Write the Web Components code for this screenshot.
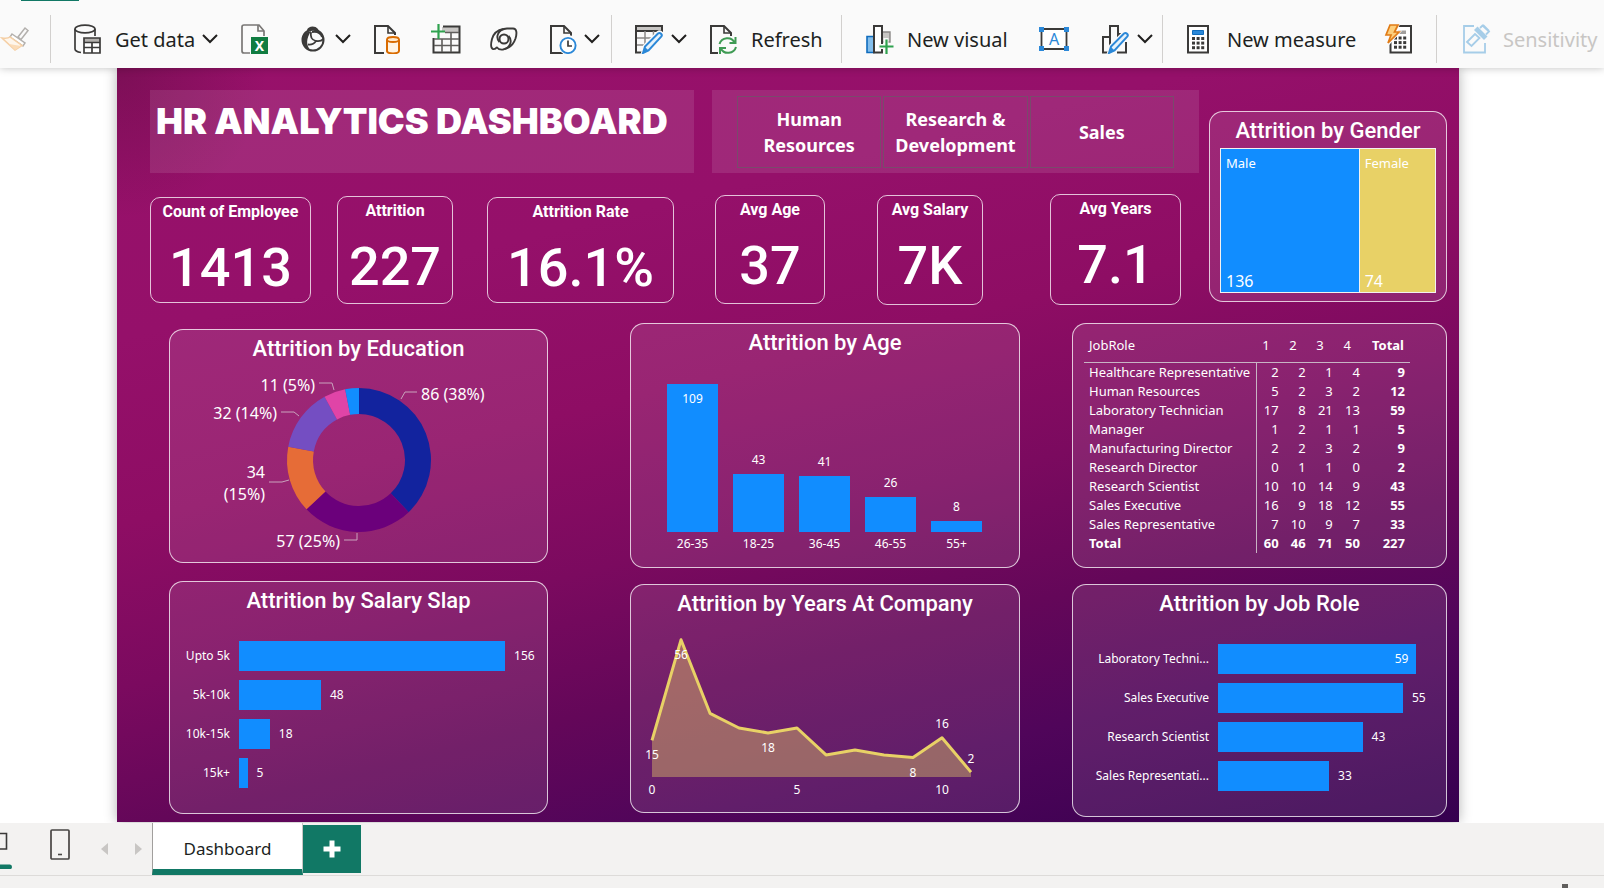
<!DOCTYPE html>
<html lang="en">
<head>
<meta charset="utf-8">
<title>HR Analytics Dashboard</title>
<style>
  html, body { margin: 0; height: 100%; }
  body {
    background: #fff;
    color: #201f1e;
    font-family: "Noto Sans", "Open Sans", sans-serif;
  }
</style>
</head>
<body>
<report-app></report-app>

<script>
const define = (name, html, render) => {
  const tpl = document.createElement('template');
  tpl.innerHTML = html;
  customElements.define(name, class extends HTMLElement {
    constructor() {
      super();
      this.attachShadow({ mode: 'open' }).append(tpl.content.cloneNode(true));
    }
    connectedCallback() {
      if (render && !this.ready) { this.ready = true; render(this, this.shadowRoot); }
    }
  });
};

/* ---------- icons, all on a 30 x 30 grid ---------- */
const D = '#3b3a39';
const page = (c = D) => `<path d="M14 29H2V2h13l7 7v3" stroke="${c}" stroke-width="2"/><path d="M15 2v7h7" stroke="${c}" stroke-width="1.6"/>`;
const pencil = `<path d="M9 29l2-7L24 9c2-1.600 5 1 3.500 3.500L15 26z" fill="#fafafa" stroke="#fafafa" stroke-width="4"/><path d="M9 29l2-6.500L24 9.500c2-1.600 5 1 3.200 3.200L14.500 26.500z" fill="#e6f2fb" stroke="#2b88d8" stroke-width="2"/><path d="M9 29l2-6 3.500 3.500z" fill="#2b88d8"/>`;
const dots = (x, y) => [0, 1, 2].map(r => [0, 1, 2].map(c => `<path d="M${x + c * 4.600} ${y + r * 4.600}h3v3h-3z" fill="${D}"/>`).join('')).join('');
const ICONS = {
  brush: `<path d="M18 13l7-9 3 2.500-7 9z" stroke="#b3b0ad" stroke-width="1.500"/><path d="M12 10l13 9-2 3-13-9z" stroke="#b3b0ad" stroke-width="1.500" fill="#fff"/><path d="M10 13c-2.500 2-5 1.500-8 1l13 12 7-4.500z" stroke="#f5cfa5" stroke-width="1.500" fill="#fef6ec"/><path d="M9 20l12 2-6 4z" fill="#fbdcb8"/>`,
  data: `<ellipse cx="12" cy="5" rx="10" ry="3.800" stroke="${D}" stroke-width="1.700"/><path d="M2 5v20c0 2 3 3 6 3.500M22 5v7" stroke="${D}" stroke-width="1.700"/><path d="M11 14h16v15H11z" fill="#fff"/><path d="M11 14h16v4H11z" fill="#b3b0ad"/><path d="M11 14h16v15H11zM11 18.500h16M11 23.500h16M19 18.500V29" stroke="${D}" stroke-width="1.700"/>`,
  excel: `<path d="M10 29H4q-2 0-2-2V3q0-2 2-2h15l5 6v5" stroke="#797775" stroke-width="1.700"/><path d="M18 1v6h6" stroke="#797775" stroke-width="1.700"/><path d="M11 13h17v17H11z" fill="#107c41"/><text x="19.500" y="26.500" text-anchor="middle" font-size="14" font-weight="700" fill="#fff">X</text>`,
  lake: `<circle cx="15" cy="16" r="10.500" stroke="${D}" stroke-width="2"/><path d="M13 7C5 9 3 13 4.500 18c1 4 4 7 8 8.300C8 21 8 15 13 7z" fill="${D}"/><path d="M9 6c1-4 8-5 11-1l1 3c-4-2-8-2-11 0z" fill="${D}"/><path d="M13 8c-1 5 1 8 5 9 3 .500 5.500 0 7.500-2M14 8c6-1 9 2 10 5M18 17c-2 3-4 4-8 3.500" stroke="${D}" stroke-width="1.800"/>`,
  pagedb: `${page()}<path d="M11 11h18v19H11z" fill="#fafafa"/><path d="M14 15.500v11.500c0 3.200 12 3.200 12 0V15.500" stroke="#d96b00" stroke-width="2" fill="#fff3e3"/><ellipse cx="20" cy="15.500" rx="6" ry="2.500" stroke="#d96b00" stroke-width="1.800" fill="#ffe9cc"/>`,
  tableplus: `<path d="M11 3h18v5H11z" fill="#c8c6c4"/><path d="M12 2.500h16.500V28.500H2.500V14" stroke="${D}" stroke-width="2"/><path d="M14 8.500h14M3 15h25M3 21.500h25M11 15v13M20 9v19" stroke="#605e5c" stroke-width="1.600"/><path d="M7.500 0v15M0 7.500h14" stroke="#2fa24f" stroke-width="2.200"/>`,
  swirl: `<circle cx="15" cy="15" r="4.500" stroke="${D}" stroke-width="2"/><path d="M10.500 18C6 13 9 5 18 4.500h6c4 0 4 5 2.500 10-2 6-6 9.500-11 10.500" stroke="${D}" stroke-width="1.900"/><path d="M19.500 12c4.500 5 1.500 12-5.500 13.500-3 .500-5-.500-6.500-2.500M14.500 5C9 6 4.500 9.500 3 15c-1 4-2 9 1 10 2 .500 3-.500 4-2" stroke="${D}" stroke-width="1.900"/>`,
  pageclock: `<g transform="translate(2 0)">${page()}<circle cx="19" cy="21" r="10" fill="#fafafa"/><circle cx="19" cy="21.500" r="7.600" fill="#fff" stroke="#2b88d8" stroke-width="1.900"/><path d="M19 16.500v5.500h4" stroke="${D}" stroke-width="1.700"/></g>`,
  tablepen: `<path d="M2 2h26v5H2z" fill="#c8c6c4"/><path d="M9 28.500H2V2h26v5H2" stroke="${D}" stroke-width="2"/><path d="M3 14h17M3 21h9M11 7v15M19.500 7v7" stroke="#8a8886" stroke-width="1.500"/>${pencil}`,
  refresh: `${page()}<path d="M9 13h18v17H9z" fill="#fafafa"/><path d="M10.500 20c2-7 12-8 15-1.500M26.500 13v6h-6M27 23c-2 7-12 8-15 1.500M11 30v-6h6" stroke="#3f9b54" stroke-width="2"/>`,
  visual: `<path d="M2 12.500h7v16H2z" fill="#83beec" stroke="#0f6cbd" stroke-width="1.600"/><path d="M16 8h9v10h-9z" fill="#c8c6c4" stroke="#8a8886" stroke-width="1.400"/><path d="M9 2h8v26.500H9z" fill="#fff" stroke="${D}" stroke-width="2"/><path d="M21 14v16M13 22.500h16" stroke="#fafafa" stroke-width="5"/><path d="M21.500 15.500V30M14.500 22.500h14" stroke="#2fa24f" stroke-width="2.200"/>`,
  textbox: `<path d="M2.500 5h25v20h-25z" fill="#fff" stroke="${D}" stroke-width="1.800"/><path d="M0 3h5v5H0zM25 3h5v5h-5zM0 22h5v5H0zM25 22h5v5h-5z" fill="#2b88d8"/><text x="15" y="21" text-anchor="middle" font-size="16" fill="#2b88d8">A</text>`,
  shapes: `<path d="M9 28.500H3V13h6M26 18v10.500h-9M10 24V2h8v12" stroke="${D}" stroke-width="2"/><path d="M18 10h6" stroke="${D}" stroke-width="2"/>${pencil}`,
  calc: `<path d="M3 2h20v26.500H3z" fill="#fff" stroke="${D}" stroke-width="2"/><path d="M7.500 6.500h11v4h-11z" fill="#2b88d8" stroke="#0f6cbd"/>${dots(7, 13)}`,
  flash: `<path d="M14 2h13v26.500H6.500V18" fill="#fff" stroke="${D}" stroke-width="2"/><path d="M14 6.500h8v3.500h-8z" fill="#a19f9d"/>${dots(10, 12.500)}<path d="M6 1h8L10.500 8H15L4 20l3-8H2z" fill="#fafafa" stroke="#fafafa" stroke-width="3"/><path d="M6 1h8L10.500 8H15L4 19l3-8H2z" fill="#fdcf7d" stroke="#e07b16" stroke-width="1.700"/>`,
  label: `<path d="M13 2H3v26.500h21V19" stroke="#a6cde8" stroke-width="1.800"/><path d="M6 18l8-8 4.500 4-8 8z" stroke="#a6cde8" stroke-width="1.800"/><path d="M13 6l10 10 3.500-3.500L16.500 2.500z" fill="#a6cde8"/><path d="M19 4l2.500-2.500 6.500 6-3 3M22 1l6 6" stroke="#a6cde8" stroke-width="1.800"/>`
};
define('icon-glyph', `
<style>:host{display:block;flex:none;width:30px;height:30px} svg{display:block;width:100%;height:100%;fill:none}</style>
<svg viewBox="0 0 30 30" aria-hidden="true"></svg>`,
  (el, r) => { r.querySelector('svg').innerHTML = ICONS[el.getAttribute('name')]; });

/* ---------- ribbon ---------- */
define('tool-button', `
<style>
:host{display:block;flex:none}
:host([menu]){margin-right:-6px}
button{display:flex;align-items:center;border:0;padding:0;background:none;font:inherit;font-size:20px;line-height:28px;color:inherit;white-space:nowrap}
.text{margin-left:12px;padding-top:2px}
.text:empty{display:none}
.chev{width:16px;height:10px;fill:none;stroke:#201f1e;stroke-width:2;margin-left:7px;display:none}
:host([menu]) .chev{display:block}
:host([disabled]) button{color:#c8c6c4}
</style>
<button type="button"><icon-glyph></icon-glyph><span class="text"></span><svg class="chev" viewBox="0 0 16 10" aria-hidden="true"><path d="M1 1l7 7 7-7"/></svg></button>`,
  (el, r) => {
    const label = el.getAttribute('label');
    const g = document.createElement('icon-glyph');
    g.setAttribute('name', el.getAttribute('icon'));
    r.querySelector('icon-glyph').replaceWith(g);
    if (label) r.querySelector('.text').textContent = label;
    r.querySelector('button').setAttribute('aria-label', label || el.getAttribute('icon'));
    if (el.hasAttribute('disabled')) r.querySelector('button').disabled = true;
  });

define('tool-group', `
<style>
:host{display:flex;align-items:center;box-sizing:border-box;height:48px;border-right:1px solid #d2d0ce;padding-left:22px;gap:28px;min-width:0}
:host([first]){padding-left:0}
:host([last]){border-right:0;padding-left:24px}
:host([wide]){padding-left:23px;gap:31px}
</style><slot></slot>`);

define('ribbon-bar', `
<style>
:host{display:block;position:relative;z-index:1;background:#fafafa;box-shadow:0 0 8px rgba(0,0,0,.25);clip-path:inset(0 0 -12px 0)}
.accent{width:58px;height:1px;margin-left:21px;background:#117865}
.row{display:grid;grid-template-columns:minmax(0,51fr) minmax(0,561fr) minmax(0,230fr) minmax(0,321fr) minmax(0,274fr) minmax(0,167fr);padding:14px 0 5px}
</style>
<div class="accent"></div>
<div class="row">
  <tool-group first><tool-button icon="brush"></tool-button></tool-group>
  <tool-group>
    <tool-button icon="data" label="Get data" menu></tool-button>
    <tool-button icon="excel"></tool-button>
    <tool-button icon="lake" menu></tool-button>
    <tool-button icon="pagedb"></tool-button>
    <tool-button icon="tableplus"></tool-button>
    <tool-button icon="swirl"></tool-button>
    <tool-button icon="pageclock" menu></tool-button>
  </tool-group>
  <tool-group>
    <tool-button icon="tablepen" menu></tool-button>
    <tool-button icon="refresh" label="Refresh"></tool-button>
  </tool-group>
  <tool-group wide>
    <tool-button icon="visual" label="New visual"></tool-button>
    <tool-button icon="textbox"></tool-button>
    <tool-button icon="shapes" menu></tool-button>
  </tool-group>
  <tool-group>
    <tool-button icon="calc" label="New measure"></tool-button>
    <tool-button icon="flash"></tool-button>
  </tool-group>
  <tool-group last><tool-button icon="label" label="Sensitivity" disabled></tool-button></tool-group>
</div>`);

/* ---------- report visuals ---------- */
define('report-title', `
<style>
:host{display:block;background:rgba(255,255,255,.1);color:#fff}
h1{margin:0;padding:9px 6px 0;font:900 36px/44px Inter,sans-serif;white-space:nowrap}
</style><h1><slot></slot></h1>`);

define('slicer-tiles', `
<style>
:host{display:block;box-sizing:border-box;background:rgba(255,255,255,.1);padding:6px 25px 5px}
div{display:grid;grid-template-columns:repeat(3,minmax(0,1fr));gap:2px;height:100%}
button{border:1px solid #7a4a6c;background:none;color:#fff;padding:0;font:inherit;font-weight:700;font-size:18px;line-height:26px}
</style>
<div><button type="button">Human Resources</button><button type="button">Research &amp; Development</button><button type="button">Sales</button></div>`);

define('kpi-card', `
<style>
:host{display:block;box-sizing:border-box;border:1px solid rgba(255,255,255,.75);border-radius:10px;color:#fff;text-align:center;font-family:Roboto,sans-serif;white-space:nowrap}
h2{margin:0;font-size:16px;font-weight:700;line-height:28px}
p{margin:14px 0 6px;font-size:54px;font-weight:500;line-height:56px}
</style><h2></h2><p><slot></slot></p>`,
  (el, r) => { r.querySelector('h2').textContent = el.getAttribute('label'); });

define('visual-card', `
<style>
:host{display:block;box-sizing:border-box;border:1px solid rgba(255,255,255,.75);border-radius:14px;background:rgba(255,255,255,.1);color:#fff}
h2{margin:0;padding-top:2px;font:500 22px/34px Roboto,sans-serif;text-align:center;white-space:nowrap}
h2:empty{display:none}
</style><h2></h2><slot></slot>`,
  (el, r) => { r.querySelector('h2').textContent = el.getAttribute('heading') || ''; });

define('tree-map', `
<style>
:host{display:grid;grid-template-columns:minmax(0,139fr) minmax(0,76fr);gap:1px;margin:0 10px 8px;padding:1px;background:#f3f2f1}
div{display:flex;flex-direction:column;justify-content:space-between;height:143px;box-sizing:border-box;padding:4px 5px 0;font-size:13px;line-height:20px}
.m{background:#118dff}.f{background:#e8d166}
b{font-weight:400;font-size:16px;line-height:22px}
</style>
<div class="m"><span>Male</span><b>136</b></div><div class="f"><span>Female</span><b>74</b></div>`);

define('donut-chart', `
<style>
:host{display:block}
svg{display:block;width:100%;height:auto;fill:none}
text{font-size:16px;fill:#fff}
.lead{stroke:#c9a3bd;stroke-width:1}
</style>
<svg viewBox="0 0 377 196" role="img" aria-label="Attrition by education">
<g class="ring"></g>
<g class="lead"><path d="M231 33l4-7h12"/><path d="M149 17h13l2 7"/><path d="M111 46h13l5 4"/><path d="M99 116h13l7-2"/><path d="M174 174h13v-7"/></g>
<text x="251" y="34">86 (38%)</text>
<text x="145" y="25" text-anchor="end">11 (5%)</text>
<text x="107" y="53" text-anchor="end">32 (14%)</text>
<text x="95" y="112" text-anchor="end">34</text>
<text x="95" y="134" text-anchor="end">(15%)</text>
<text x="170" y="181" text-anchor="end">57 (25%)</text>
</svg>`,
  (el, r) => {
    const values = [86, 57, 34, 32, 11, 7];
    const colors = ['#12239e', '#6b007b', '#e66c37', '#744ec2', '#e044a7', '#118dff'];
    const total = values.reduce((a, b) => a + b);
    const cx = 189, cy = 94, R = 72, q = 46;
    let a = 0;
    const pt = (rad, t) => `${(cx + rad * Math.sin(t)).toFixed(2)} ${(cy - rad * Math.cos(t)).toFixed(2)}`;
    r.querySelector('.ring').innerHTML = values.map((v, i) => {
      const b = a + v / total * Math.PI * 2;
      const d = `M${pt(R, a)}A${R} ${R} 0 0 1 ${pt(R, b)}L${pt(q, b)}A${q} ${q} 0 0 0 ${pt(q, a)}z`;
      a = b;
      return `<path fill="${colors[i]}" d="${d}"/>`;
    }).join('');
  });

define('column-chart', `
<style>
:host{display:block;padding:0 37px 13px 36px;font-size:12px;line-height:20px;text-align:center}
.plot{display:grid;grid-template-columns:repeat(5,minmax(0,1fr));gap:15px}
.col{display:flex;flex-direction:column;justify-content:flex-end;height:172px}
.bar{background:#118dff}
.v{margin-bottom:4px}
.bar .v{display:block;margin-top:5px}
.cat{margin-top:2px}
</style><div class="plot"></div>`,
  (el, r) => {
    const data = [['26-35', 109], ['18-25', 43], ['36-45', 41], ['46-55', 26], ['55+', 8]];
    r.querySelector('.plot').innerHTML = data.map(([c, v], i) => {
      const h = `style="height:${Math.round(v / 109 * 148)}px"`;
      const bar = i ? `<span class="v">${v}</span><div class="bar" ${h}></div>` : `<div class="bar" ${h}><span class="v">${v}</span></div>`;
      return `<div><div class="col">${bar}</div><div class="cat">${c}</div></div>`;
    }).join('');
  });

define('bar-chart', `
<style>
:host{display:grid;gap:9px;padding:23px 0 25px;font-size:12px;line-height:30px;white-space:nowrap}
.row{display:grid;grid-template-columns:var(--label) minmax(0,1fr);column-gap:9px}
.name{text-align:right}
.track{display:flex;gap:9px}
.bar{height:30px;background:#118dff;text-align:right;box-sizing:border-box;padding-right:8px}
.bar:empty{padding:0}
</style>`,
  (el, r) => {
    const data = JSON.parse(el.getAttribute('data'));
    const max = data[0][1], inside = el.hasAttribute('inside'), full = inside ? 87 : 86.400;
    r.innerHTML += data.map(([n, v], i) => {
      const w = `style="width:${(v / max * full).toFixed(1)}%"`;
      const t = inside && !i ? `<div class="bar" ${w}>${v}</div>` : `<div class="bar" ${w}></div><span>${v}</span>`;
      return `<div class="row"><span class="name">${n}</span><div class="track">${t}</div></div>`;
    }).join('');
  });

define('area-chart', `
<style>
:host{display:block}
svg{display:block;width:100%;height:auto;fill:none}
text{font-size:12px;fill:#fff;text-anchor:middle}
</style>
<svg viewBox="0 0 388 191" role="img" aria-label="Attrition by years at company">
<path class="fill" fill="#e8d166" fill-opacity=".4"/><path class="line" stroke="#e8d166" stroke-width="3" stroke-linejoin="round"/>
<text x="21" y="138">15</text><text x="50" y="38">56</text><text x="137" y="131">18</text><text x="282" y="156">8</text><text x="311" y="107">16</text><text x="340" y="142">2</text>
<text x="21" y="173">0</text><text x="166" y="173">5</text><text x="311" y="173">10</text>
</svg>`,
  (el, r) => {
    const v = [15, 56, 26, 20, 18, 20, 9, 11, 9, 8, 16, 2];
    const pts = v.map((n, i) => `${21 + i * 29} ${(156 - n * 2.450).toFixed(1)}`).join('L');
    r.querySelector('.line').setAttribute('d', 'M' + pts);
    r.querySelector('.fill').setAttribute('d', `M21 156L${pts}L340 156z`);
  });

define('role-matrix', `
<style>
:host{display:block;padding:4px 11px 14px}
table{border-collapse:separate;border-spacing:0;table-layout:fixed;width:326px;font-size:13px;line-height:19px;white-space:nowrap}
th,td{padding:0 5px 0 0;text-align:right;font-weight:400}
th:first-child{text-align:left;padding:0 0 0 5px;width:167px}
thead th{height:34px;border-bottom:1px solid #c8b4c4}
thead th:not(:first-child):not(:last-child){padding-right:14px;width:13px}
tbody th,tfoot th{border-right:1px solid #c8b4c4}
td:last-child,th:last-child,tfoot th,tfoot td{font-weight:700}
thead th:last-child{padding-right:6px;width:39px}
</style>
<table>
<thead><tr><th scope="col">JobRole</th><th scope="col">1</th><th scope="col">2</th><th scope="col">3</th><th scope="col">4</th><th scope="col">Total</th></tr></thead>
<tbody></tbody><tfoot></tfoot>
</table>`,
  (el, r) => {
    const rows = [
      ['Healthcare Representative', 2, 2, 1, 4, 9], ['Human Resources', 5, 2, 3, 2, 12],
      ['Laboratory Technician', 17, 8, 21, 13, 59], ['Manager', 1, 2, 1, 1, 5],
      ['Manufacturing Director', 2, 2, 3, 2, 9], ['Research Director', 0, 1, 1, 0, 2],
      ['Research Scientist', 10, 10, 14, 9, 43], ['Sales Executive', 16, 9, 18, 12, 55],
      ['Sales Representative', 7, 10, 9, 7, 33]];
    const tr = ([n, ...c]) => `<tr><th scope="row">${n}</th>${c.map(x => `<td>${x}</td>`).join('')}</tr>`;
    r.querySelector('tbody').innerHTML = rows.map(tr).join('');
    r.querySelector('tfoot').innerHTML = tr(['Total', 60, 46, 71, 50, 227]);
  });

define('report-canvas', `
<style>
:host{
  display:block;box-sizing:border-box;padding:22px 0 5px;
  background:
    radial-gradient(circle at 0 0,rgba(60,10,40,.3),transparent 150px),
    linear-gradient(166deg,#98116a 0%,#95106a 25%,#8e0d64 42%,#7b0a5f 57%,#640759 70%,#50055a 82%,#35004f 100%);
  box-shadow:0 0 12px rgba(0,0,0,.3)}
.top{display:grid;grid-template-columns:minmax(0,33fr) minmax(0,1049fr) minmax(0,10fr) minmax(0,238fr) minmax(0,12fr)}
.left{grid-column:2}
.gender{grid-column:4;align-self:start;margin-top:21px}
.heads{display:grid;grid-template-columns:minmax(0,544fr) minmax(0,18fr) minmax(0,487fr);min-height:83px}
slicer-tiles{grid-column:3}
.kpis{display:grid;align-items:center;min-height:111px;margin-top:21px;
  grid-template-columns:minmax(0,161fr) minmax(0,26fr) minmax(0,116fr) minmax(0,34fr) minmax(0,187fr) minmax(0,41fr) minmax(0,110fr) minmax(0,52fr) minmax(0,106fr) minmax(0,67fr) minmax(0,131fr) minmax(0,18fr)}
kpi-card:nth-child(2){grid-column:3;min-height:108px}
kpi-card:nth-child(3){grid-column:5}
kpi-card:nth-child(4){grid-column:7;min-height:109px}
kpi-card:nth-child(5){grid-column:9;min-height:110px}
kpi-card:nth-child(6){grid-column:11;min-height:111px}
.charts{display:grid;margin-top:18px;
  grid-template-columns:minmax(0,52fr) minmax(0,379fr) minmax(0,82fr) minmax(0,390fr) minmax(0,52fr) minmax(0,375fr) minmax(0,12fr)}
.stack{display:flex;flex-direction:column;gap:16px}
.a{grid-column:2;padding-top:6px;gap:18px}.b{grid-column:4}.c{grid-column:6}
</style>
<div class="top">
  <div class="left">
    <div class="heads"><report-title>HR ANALYTICS DASHBOARD</report-title><slicer-tiles></slicer-tiles></div>
    <div class="kpis">
      <kpi-card label="Count of Employee">1413</kpi-card>
      <kpi-card label="Attrition">227</kpi-card>
      <kpi-card label="Attrition Rate">16.1%</kpi-card>
      <kpi-card label="Avg Age">37</kpi-card>
      <kpi-card label="Avg Salary">7K</kpi-card>
      <kpi-card label="Avg Years">7.1</kpi-card>
    </div>
  </div>
  <visual-card class="gender" heading="Attrition by Gender"><tree-map></tree-map></visual-card>
</div>
<div class="charts">
  <div class="stack a">
    <visual-card heading="Attrition by Education"><donut-chart></donut-chart></visual-card>
    <visual-card heading="Attrition by Salary Slap"><bar-chart style="--label:60px" data='[["Upto 5k",156],["5k-10k",48],["10k-15k",18],["15k+",5]]'></bar-chart></visual-card>
  </div>
  <div class="stack b">
    <visual-card heading="Attrition by Age"><column-chart></column-chart></visual-card>
    <visual-card heading="Attrition by Years At Company"><area-chart></area-chart></visual-card>
  </div>
  <div class="stack c">
    <visual-card><role-matrix></role-matrix></visual-card>
    <visual-card heading="Attrition by Job Role"><bar-chart inside style="--label:136px" data='[["Laboratory Techni...",59],["Sales Executive",55],["Research Scientist",43],["Sales Representati...",33]]'></bar-chart></visual-card>
  </div>
</div>`);

/* ---------- page tabs ---------- */
define('page-tabs', `
<style>
:host{display:block;position:relative;z-index:1;background:#f3f2f1}
.row{display:flex;height:52px;border-bottom:1px solid #dddbd9}
button{border:0;padding:0;margin:0;background:none;font:inherit;color:inherit;display:block}
svg{display:block;fill:none}
.views{display:flex;width:90px}
.arrows{display:flex;width:62px;align-items:center;justify-content:center;gap:27px}
.tab{width:151px;box-sizing:border-box;background:#fff;border-left:1px solid #a19f9d;border-right:1px solid #c8c6c4;border-bottom:6px solid #117865;padding-top:6px;font-size:17px;line-height:40px}
.add{width:58px;height:48px;margin-top:2px;background:#117865}
.status{height:12px;display:flex;justify-content:flex-end;align-items:flex-end}
.status i{width:6px;height:4px;margin-right:36px;background:#605e5c}
</style>
<div class="row" role="tablist">
  <div class="views">
    <button type="button" aria-label="Desktop layout"><svg width="50" height="52" viewBox="0 0 50 52"><path d="M-16 10.500H6.500V26H-16z" stroke="#3b3a39" stroke-width="1.600"/><path d="M0 41.500h10q2 0 2 2.500t-2 2H0z" fill="#117865"/></svg></button>
    <button type="button" aria-label="Phone layout"><svg width="20" height="52" viewBox="0 0 20 52"><rect x="1" y="7" width="18" height="29" rx="1" stroke="#484644" stroke-width="1.700"/><path d="M8 31.500h4" stroke="#484644" stroke-width="1.600"/></svg></button>
  </div>
  <div class="arrows">
    <button type="button" aria-label="Previous page"><svg width="7" height="12"><path d="M7 0v12L0 6z" fill="#c8c6c4"/></svg></button>
    <button type="button" aria-label="Next page"><svg width="7" height="12"><path d="M0 0v12l7-6z" fill="#c8c6c4"/></svg></button>
  </div>
  <button class="tab" type="button" role="tab" aria-selected="true">Dashboard</button>
  <button class="add" type="button" aria-label="New page"><svg width="58" height="48" viewBox="0 0 58 48"><path d="M29 15.500v17M20.500 24h17" stroke="#fff" stroke-width="5"/></svg></button>
</div>
<div class="status"><i></i></div>`);

define('report-app', `
<style>
:host{display:flex;flex-direction:column;min-height:100vh;overflow:hidden}
main{flex:1;padding:0 145px 0 117px}
</style>
<ribbon-bar></ribbon-bar>
<main><report-canvas></report-canvas></main>
<page-tabs></page-tabs>`);
</script>
</body>
</html>
